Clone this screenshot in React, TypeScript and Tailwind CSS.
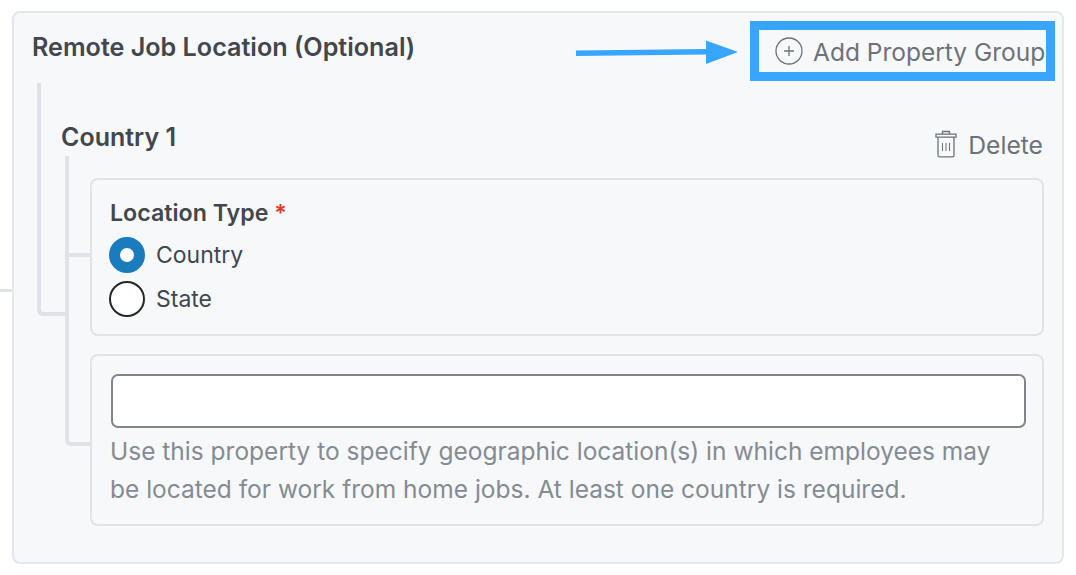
const lineColor = "bg-[#dfe3e8]";

function PlusCircleIcon() {
  return (
    <svg width="28" height="28" viewBox="0 0 28 28" fill="none" stroke="#6c7278" strokeWidth="1.3" className="shrink-0">
      <circle cx="14" cy="14" r="13" />
      <path d="M14 9v10M9 14h10" />
    </svg>
  );
}

function TrashIcon() {
  return (
    <svg width="22" height="28" viewBox="0 0 22 28" fill="none" stroke="#6c7278" strokeWidth="1.3" className="shrink-0">
      <path d="M7.5 4.2V1.5h7v2.7" />
      <path d="M1 4.2h20v3H1z" />
      <path d="M3 7.2v18a1.6 1.6 0 0 0 1.6 1.6h12.8a1.6 1.6 0 0 0 1.6-1.6v-18" />
      <path d="M7.5 13v8M11 13v8M14.5 13v8" strokeWidth="1" />
    </svg>
  );
}

function Radio({ label, checked }: { label: string; checked?: boolean }) {
  return (
    <label className="flex h-[36px] items-center gap-[11px]">
      {checked ? (
        <span className="h-[36px] w-[36px] rounded-full border-[11px] border-[#1a7cbc] bg-white" />
      ) : (
        <span className="h-[36px] w-[36px] rounded-full border-2 border-[#24282c] bg-white" />
      )}
      <span className="mt-[1px] text-[23px] leading-none text-[#41474d]">{label}</span>
    </label>
  );
}

export default function App() {
  return (
    <div className="h-[575px] w-[1076px] overflow-hidden bg-white pl-[12px] pt-[11px] font-['Inter',sans-serif]">
      {/* outer stub on the left of the panel */}
      <div className={`absolute left-0 top-[289px] h-[3px] w-[12px] ${lineColor}`} />
      {/* white notch over the top edge */}
      <div className="absolute left-[640px] top-[9px] h-[3px] w-[105px] bg-white" />

      <div className="relative h-[553px] w-[1052px] rounded-[8px] border-2 border-[#e4e7eb] bg-[#f7f8fa]">
        <div className="flex h-[70px] items-start justify-between pl-[18px] pr-[7px] pt-[8px]">
          <h3 className="pt-[8px] text-[25.15px] font-semibold leading-[36px] text-[#41474d]">
            Remote Job Location (Optional)
          </h3>
          <div className="flex items-center gap-[10px]">
            <svg width="164" height="28" viewBox="0 0 164 28" className="mt-[4px] shrink-0">
              <path d="M0 11.5 L130 10 V1.5 L162 13 L130 25 V15.5 L0 17z" fill="#38a6ff" />
            </svg>
            <button className="flex h-[60px] w-[305px] items-center gap-[10px] border-[9px] border-[#38a6ff] pl-[16px]">
              <PlusCircleIcon />
              <span className="mt-[3px] whitespace-nowrap text-[24.5px] leading-none text-[#6c7278]">Add Property Group</span>
            </button>
          </div>
        </div>

        {/* level one connector */}
        <div className="absolute left-[23px] top-[70px] h-[233px] w-[32px] rounded-bl-[6px] border-b-4 border-l-4 border-[#dfe3e8]" />

        <div className="ml-[47px] flex h-[95px] items-start justify-between pr-[19px]">
          <h4 className="pt-[36px] text-[25px] font-semibold leading-[36px] text-[#41474d]">Country 1</h4>
          <button className="mt-[47px] flex items-center gap-[11px]">
            <TrashIcon />
            <span className="mt-[3px] text-[24.7px] leading-none text-[#6c7278]">Delete</span>
          </button>
        </div>

        {/* level two connector */}
        <div className="absolute left-[51px] top-[143px] h-[290px] w-[25px] rounded-bl-[6px] border-b-4 border-l-4 border-[#dfe3e8]" />
        <div className={`absolute left-[55px] top-[240px] h-[4px] w-[21px] ${lineColor}`} />

        <div className="ml-[76px] flex w-[954px] flex-col gap-[18px]">
          <section className="h-[158px] rounded-[8px] border-2 border-[#e0e4e8] bg-[#f7f8fa] px-[17px] pt-[16px]">
            <div className="mb-[7px] ml-[1px] text-[23.2px] font-semibold leading-[34px] text-[#41474d]">
              Location Type <span className="text-[#e0392b]">*</span>
            </div>
            <div className="flex flex-col gap-[8px]">
              <Radio label="Country" checked />
              <Radio label="State" />
            </div>
          </section>

          <section className="h-[172px] rounded-[8px] border-2 border-[#e0e4e8] bg-[#f7f8fa] px-[19px] pt-[18px]">
            <div className="h-[54px] w-[915px] rounded-[7px] border-2 border-[#7f858b] bg-white" />
            <p className="-ml-[1px] mt-[4px] w-[900px] text-[24.5px] leading-[38px] text-[#858b92]">
              Use this property to specify geographic location(s) in which employees may be located for work from home jobs. At least one country is required.
            </p>
          </section>
        </div>
      </div>
    </div>
  );
}
